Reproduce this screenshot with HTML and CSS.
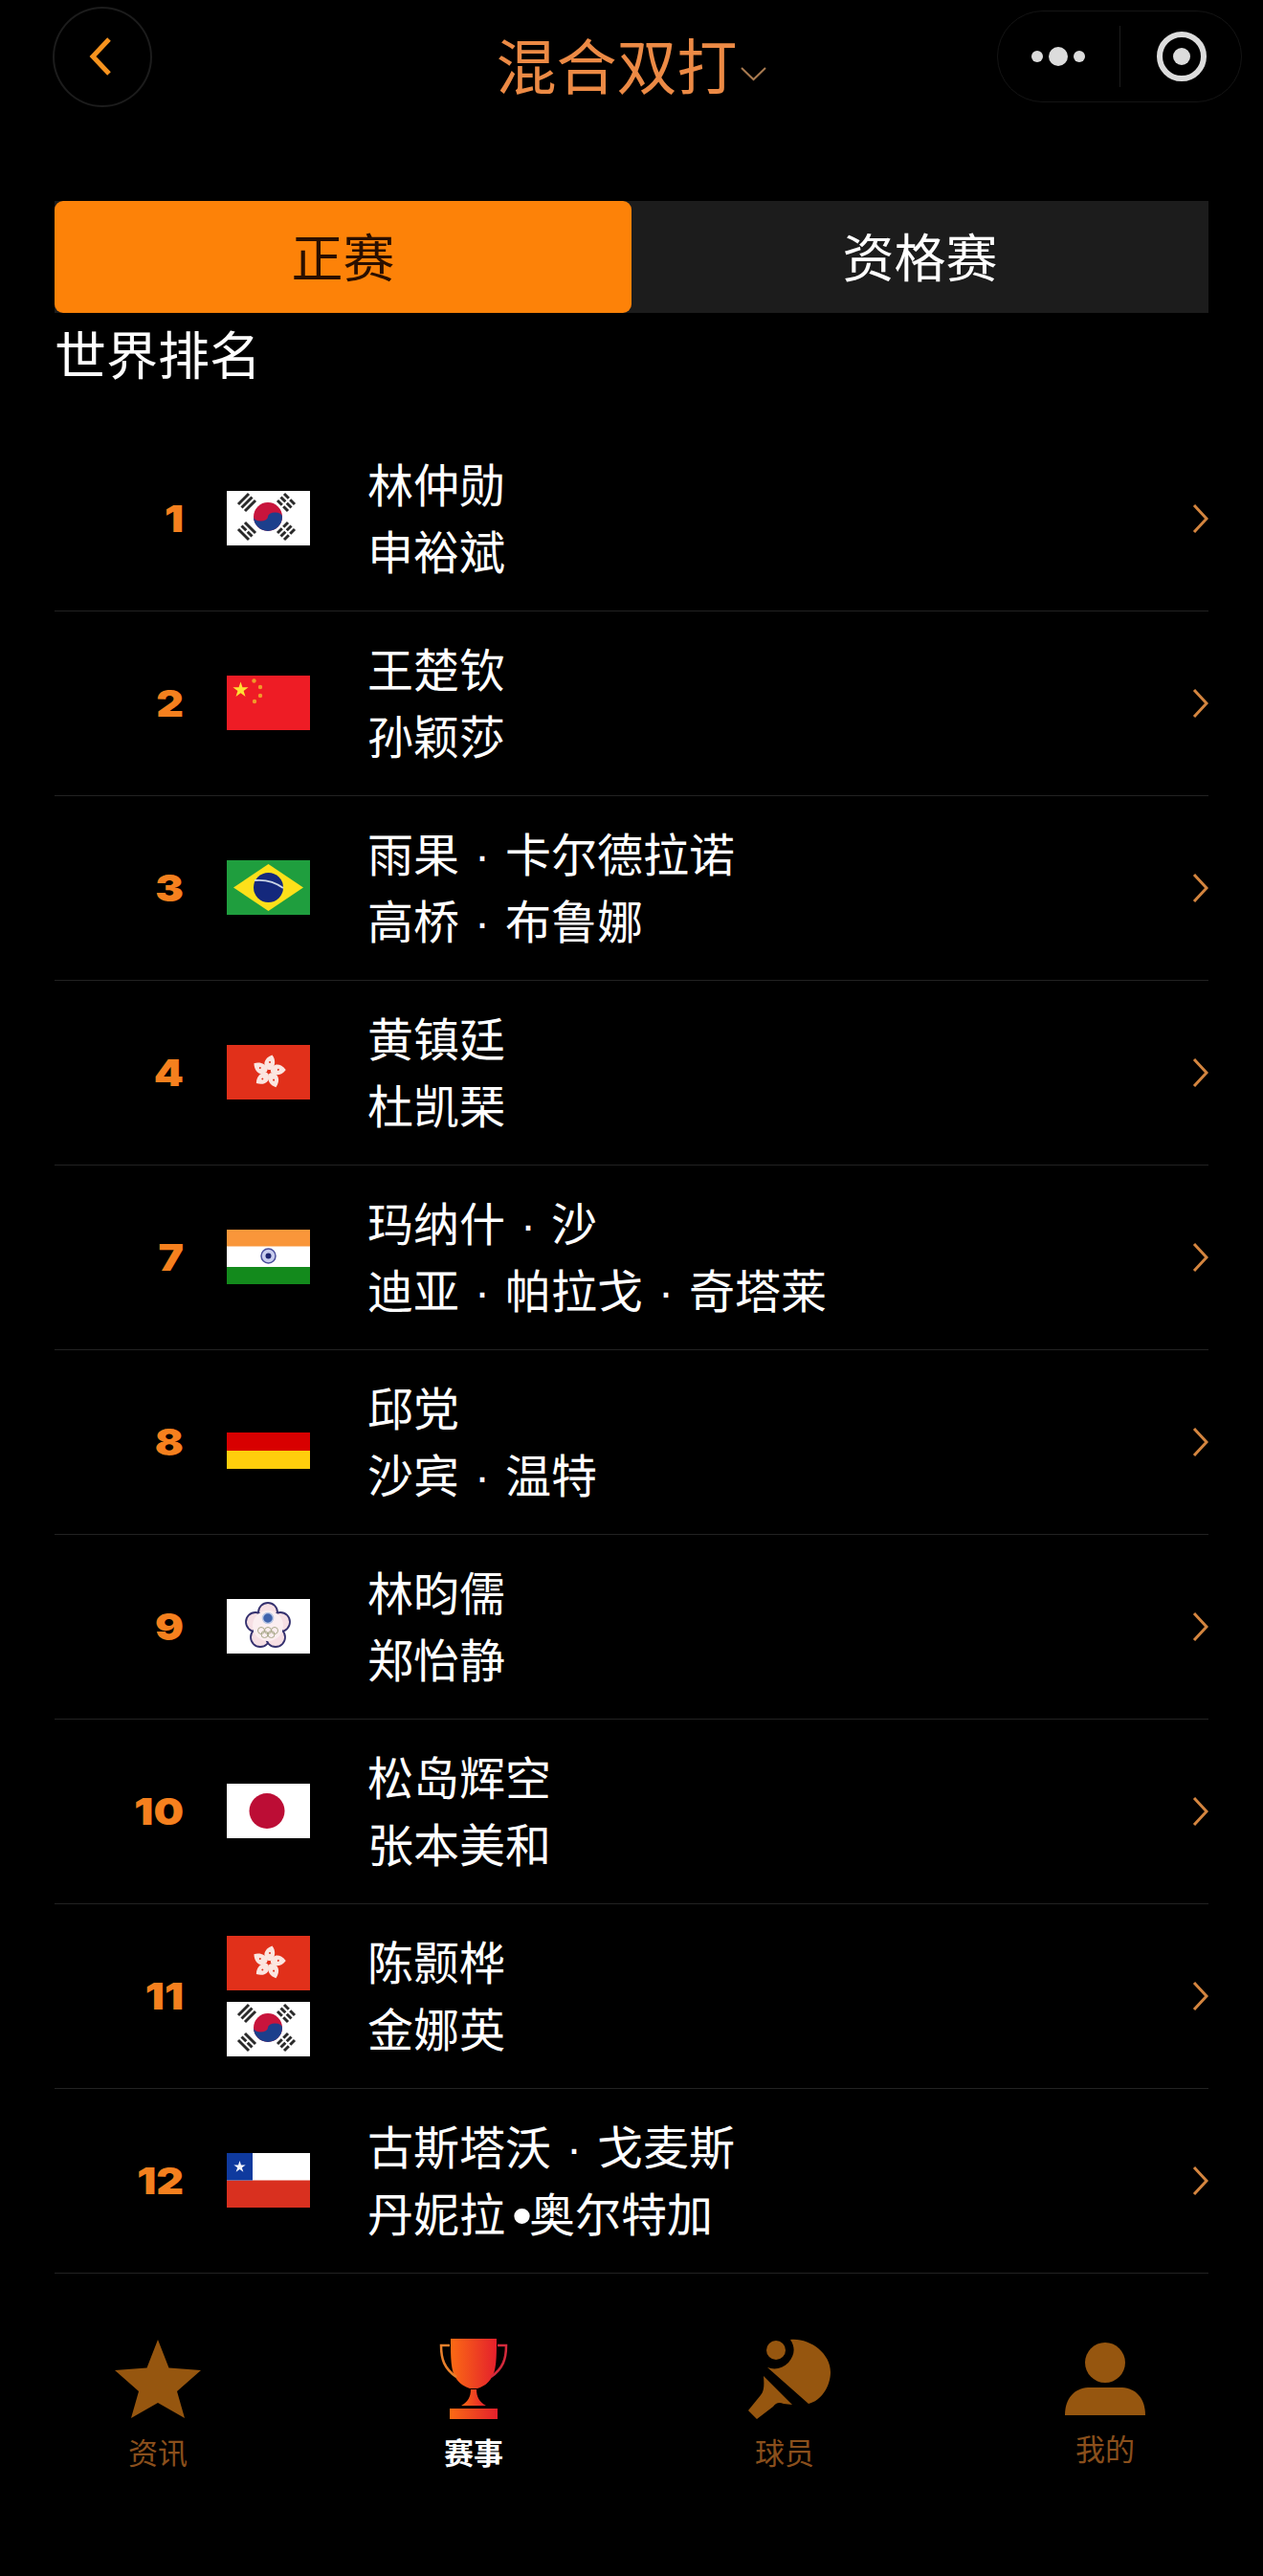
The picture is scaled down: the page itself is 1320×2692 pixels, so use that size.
FILE: index.html
```html
<!DOCTYPE html>
<html lang="zh-CN">
<head>
<meta charset="UTF-8">
<meta name="viewport" content="width=device-width, initial-scale=1.0">
<title>混合双打</title>
<link rel="stylesheet" href="styles.css">
</head>
<body>
  <svg class="defs" width="0" height="0">
    <defs>
      <symbol id="kor" viewBox="0 0 87 57">
        <rect width="87" height="57" fill="#fff"/>
        <circle cx="43" cy="27" r="15" fill="#c8143c"/>
        <path d="M28 27a15 15 0 0 0 30 0a7.500 4.500 0 0 0-15 0a7.500 4.500 0 0 1-15 0z" fill="#1c3f8c"/>
        <g stroke="#2a2a2a" stroke-width="3">
          <path d="M12 14 23 3M15.500 17.500 26.500 6.500M19 21 30 10"/>
          <path d="M60 3 71 14M56.500 6.500 67.500 17.500M53 10 64 21" stroke-dasharray="6.800 2"/>
          <path d="M12 40 23 51M19 33 30 44" />
          <path d="M15.500 36.500 26.500 47.500" stroke-dasharray="6.800 2"/>
          <path d="M60 51 71 40M56.500 47.500 67.500 36.500M53 44 64 33" stroke-dasharray="6.800 2"/>
        </g>
      </symbol>
      <symbol id="hkg" viewBox="0 0 87 57">
        <rect width="87" height="57" fill="#e1301a"/>
        <g id="petal">
          <path d="M43.500 26C37 22 38 14 47.500 10.500c4 5 3.500 12-1.500 15.500z" fill="#fbe6e0"/>
          <circle cx="45" cy="18" r="1" fill="#e1301a"/>
        </g>
        <use href="#petal" transform="rotate(72 44 28)"/>
        <use href="#petal" transform="rotate(144 44 28)"/>
        <use href="#petal" transform="rotate(216 44 28)"/>
        <use href="#petal" transform="rotate(288 44 28)"/>
      </symbol>
    </defs>
  </svg>

  <header class="top">
    <button class="back">
      <svg width="24" height="42" viewBox="0 0 24 42"><path d="M21 3 4 21l17 18" fill="none" stroke="#f7931e" stroke-width="5"/></svg>
    </button>
    <h1 class="title">混合双打<svg class="caret" width="29" height="16" viewBox="0 0 29 16"><path d="M2 2l12.500 12L27 2" fill="none" stroke="#a87a50" stroke-width="2"/></svg></h1>
    <div class="capsule">
      <div class="dots"><i></i><i class="big"></i><i></i></div>
      <div class="capsule-line"></div>
      <div class="target"><i></i></div>
    </div>
  </header>

  <div class="tabs">
    <div class="tab active">正赛</div>
    <div class="tab">资格赛</div>
  </div>

  <h2 class="section">世界排名</h2>

  <ul class="rank-list">
    <li class="row">
      <span class="rank">1</span>
      <div class="flags"><svg class="flag"><use href="#kor"/></svg></div>
      <div class="names"><div>林仲勋</div><div>申裕斌</div></div>
      <svg class="arrow" width="18" height="32" viewBox="0 0 18 32"><path d="M3 2l13 14L3 30"/></svg>
    </li>
    <li class="row">
      <span class="rank">2</span>
      <div class="flags">
        <svg class="flag" viewBox="0 0 87 57">
          <rect width="87" height="57" fill="#ee1c25"/>
          <polygon points="14.500,6.500 16.440,12.330 22.580,12.370 17.640,16.020 19.500,21.880 14.500,18.300 9.500,21.880 11.360,16.020 6.420,12.370 12.560,12.330" fill="#ffe034"/>
          <g fill="#f09a2a"><circle cx="28.500" cy="5.500" r="2.200"/><circle cx="35" cy="12" r="2.200"/><circle cx="35" cy="21" r="2.200"/><circle cx="29" cy="27" r="2.200"/></g>
        </svg>
      </div>
      <div class="names"><div>王楚钦</div><div>孙颖莎</div></div>
      <svg class="arrow" width="18" height="32" viewBox="0 0 18 32"><path d="M3 2l13 14L3 30"/></svg>
    </li>
    <li class="row">
      <span class="rank">3</span>
      <div class="flags">
        <svg class="flag" viewBox="0 0 87 57">
          <rect width="87" height="57" fill="#1f9e3e"/>
          <path d="M43.500 4 80 28.500 43.500 53 7 28.500z" fill="#fde01a"/>
          <circle cx="43.500" cy="28.500" r="15.500" fill="#14287c"/>
          <path d="M29 21c11-1 22 2 30 8" fill="none" stroke="#ccd6e6" stroke-width="1.800"/>
        </svg>
      </div>
      <div class="names"><div>雨果<span class="sep">·</span>卡尔德拉诺</div><div>高桥<span class="sep">·</span>布鲁娜</div></div>
      <svg class="arrow" width="18" height="32" viewBox="0 0 18 32"><path d="M3 2l13 14L3 30"/></svg>
    </li>
    <li class="row">
      <span class="rank">4</span>
      <div class="flags"><svg class="flag"><use href="#hkg"/></svg></div>
      <div class="names"><div>黄镇廷</div><div>杜凯琹</div></div>
      <svg class="arrow" width="18" height="32" viewBox="0 0 18 32"><path d="M3 2l13 14L3 30"/></svg>
    </li>
    <li class="row">
      <span class="rank">7</span>
      <div class="flags">
        <svg class="flag" viewBox="0 0 87 57">
          <rect width="87" height="57" fill="#fff"/>
          <rect width="87" height="17.500" fill="#f9963a"/>
          <rect y="39" width="87" height="18" fill="#138a1c"/>
          <circle cx="43.500" cy="27.500" r="7.500" fill="#c9cdee" stroke="#4a4f9c" stroke-width="1.500"/>
          <circle cx="43.500" cy="27.500" r="3" fill="#1e2470"/>
        </svg>
      </div>
      <div class="names"><div>玛纳什<span class="sep">·</span>沙</div><div>迪亚<span class="sep">·</span>帕拉戈<span class="sep">·</span>奇塔莱</div></div>
      <svg class="arrow" width="18" height="32" viewBox="0 0 18 32"><path d="M3 2l13 14L3 30"/></svg>
    </li>
    <li class="row">
      <span class="rank">8</span>
      <div class="flags">
        <svg class="flag" viewBox="0 0 87 57">
          <rect width="87" height="19" fill="#000"/>
          <rect y="19" width="87" height="19" fill="#d80000"/>
          <rect y="38" width="87" height="19" fill="#ffce0c"/>
        </svg>
      </div>
      <div class="names"><div>邱党</div><div>沙宾<span class="sep">·</span>温特</div></div>
      <svg class="arrow" width="18" height="32" viewBox="0 0 18 32"><path d="M3 2l13 14L3 30"/></svg>
    </li>
    <li class="row">
      <span class="rank">9</span>
      <div class="flags">
        <svg class="flag" viewBox="0 0 87 57">
          <rect width="87" height="57" fill="#fff"/>
          <g fill="#f6dfe4" stroke="#34306e" stroke-width="1.800">
            <circle cx="43" cy="14" r="10"/><circle cx="30" cy="24" r="10"/><circle cx="56" cy="24" r="10"/><circle cx="35" cy="40" r="10"/><circle cx="51" cy="40" r="10"/>
          </g>
          <circle cx="43" cy="28" r="16" fill="#fbeef0"/>
          <circle cx="43" cy="20" r="5.500" fill="#3f63ad" stroke="#bcc9e6" stroke-width="1.500"/>
          <g fill="none" stroke="#a9a88a" stroke-width="1"><circle cx="36" cy="33" r="3.500"/><circle cx="43" cy="33" r="3.500"/><circle cx="50" cy="33" r="3.500"/><circle cx="39.500" cy="37" r="3.500"/><circle cx="46.500" cy="37" r="3.500"/></g>
        </svg>
      </div>
      <div class="names"><div>林昀儒</div><div>郑怡静</div></div>
      <svg class="arrow" width="18" height="32" viewBox="0 0 18 32"><path d="M3 2l13 14L3 30"/></svg>
    </li>
    <li class="row">
      <span class="rank">10</span>
      <div class="flags">
        <svg class="flag" viewBox="0 0 87 57">
          <rect width="87" height="57" fill="#fff"/>
          <circle cx="42" cy="28.500" r="18.500" fill="#bc0d35"/>
        </svg>
      </div>
      <div class="names"><div>松岛辉空</div><div>张本美和</div></div>
      <svg class="arrow" width="18" height="32" viewBox="0 0 18 32"><path d="M3 2l13 14L3 30"/></svg>
    </li>
    <li class="row">
      <span class="rank">11</span>
      <div class="flags">
        <svg class="flag"><use href="#hkg"/></svg>
        <svg class="flag"><use href="#kor"/></svg>
      </div>
      <div class="names"><div>陈颢桦</div><div>金娜英</div></div>
      <svg class="arrow" width="18" height="32" viewBox="0 0 18 32"><path d="M3 2l13 14L3 30"/></svg>
    </li>
    <li class="row">
      <span class="rank">12</span>
      <div class="flags">
        <svg class="flag" viewBox="0 0 87 57">
          <rect width="87" height="57" fill="#fff"/>
          <rect y="28.500" width="87" height="28.500" fill="#d9301f"/>
          <rect width="27" height="28.500" fill="#0f3a9e"/>
          <polygon points="13.500,8 14.970,12.480 19.680,12.490 15.880,15.270 17.320,19.760 13.500,17 9.680,19.760 11.120,15.270 7.320,12.490 12.030,12.480" fill="#f2f4fa"/>
        </svg>
      </div>
      <div class="names"><div>古斯塔沃<span class="sep">·</span>戈麦斯</div><div>丹妮拉<span class="bullet">•</span>奥尔特加</div></div>
      <svg class="arrow" width="18" height="32" viewBox="0 0 18 32"><path d="M3 2l13 14L3 30"/></svg>
    </li>
  </ul>

  <nav class="tabbar">
    <div class="nav-item">
      <svg class="nav-icon" width="90" height="84" viewBox="0 0 90 84"><path d="M45 1l11.500 29.500L90 33 65 55l8 28-28-16-28 16 8-28L0 33l33.500-2.500z" fill="#96560f"/></svg>
      <span>资讯</span>
    </div>
    <div class="nav-item on">
      <svg class="nav-icon" width="72" height="84" viewBox="0 0 72 84">
        <defs><linearGradient id="cup" x1="0" x2="1" y1="0" y2="0"><stop offset="0" stop-color="#fb6a14"/><stop offset="1" stop-color="#e4202c"/></linearGradient></defs>
        <path d="M12 0h48c0 20 0 34-6 42-4 6-9 8-14 10h-8c-5-2-10-4-14-10-6-8-6-22-6-42z" fill="url(#cup)"/>
        <path d="M11 7H2c0 14 3 24 16 33" fill="none" stroke="#e8802c" stroke-width="2.500"/>
        <path d="M61 7h9c0 14-3 24-16 33" fill="none" stroke="#d42a3c" stroke-width="2.500"/>
        <path d="M33 53h6c0 8 3 13 10 17H23c7-4 10-9 10-17z" fill="url(#cup)"/>
        <rect x="11" y="73" width="50" height="11" fill="url(#cup)"/>
      </svg>
      <span>赛事</span>
    </div>
    <div class="nav-item player">
      <svg class="nav-icon" width="86" height="84" viewBox="0 0 86 84">
        <g fill="#96560f">
          <circle cx="29" cy="12" r="10"/>
          <path d="M44 1c20-2 42 14 42 34 0 15-10 30-23 33L20 30c8 3 16 1 22-5 6-7 8-15 2-24z"/>
          <path d="M16 39l30 30-9-1c-5-2-8-1-11 3L9 84 0 75l13-16c3-4 4-8 3-20z"/>
        </g>
      </svg>
      <span>球员</span>
    </div>
    <div class="nav-item me">
      <svg class="nav-icon" width="84" height="76" viewBox="0 0 84 76">
        <ellipse cx="42" cy="21" rx="21" ry="21" fill="#96560f"/>
        <path d="M0 76c0-18 10-28 24-29h36c14 1 24 11 24 29z" fill="#96560f"/>
      </svg>
      <span>我的</span>
    </div>
  </nav>
</body>
</html>
```

FILE: styles.css
```css
* {
  box-sizing: border-box;
}
body {
  margin: 0;
  background-color: #000;
  color: #fff;
  font-family: "Liberation Sans", "Noto Sans CJK SC", sans-serif;
}
.defs {
  display: block;
  height: 0;
}

/* top bar */
.top {
  display: grid;
  grid-template-columns: 1fr auto 1fr;
  align-items: center;
  height: 118px;
  padding: 0 22px;
}
.back {
  display: flex;
  align-items: center;
  justify-content: center;
  width: 104px;
  height: 105px;
  margin-left: 33px;
  padding: 0 5px 0 0;
  border: 2px solid #1c1c1c;
  border-radius: 50%;
  background: none;
}
.title {
  display: flex;
  align-items: center;
  margin: 24px 0 0;
  color: #ec8a45;
  font-size: 63px;
  font-weight: 400;
  line-height: 80px;
}
.caret {
  margin-top: 12px;
  margin-left: 2px;
}
.capsule {
  display: flex;
  align-items: center;
  justify-self: end;
  width: 256px;
  height: 96px;
  border: 1px solid #141414;
  border-radius: 48px;
}
.dots {
  display: flex;
  align-items: center;
  gap: 6px;
  margin-left: 35px;
}
.dots i {
  width: 12px;
  height: 12px;
  border-radius: 50%;
  background-color: #dcdcdc;
}
.dots i.big {
  width: 20px;
  height: 20px;
}
.capsule-line {
  width: 1px;
  height: 64px;
  margin-left: 36px;
  background-color: #1c1c1c;
}
.target {
  display: flex;
  align-items: center;
  justify-content: center;
  width: 52px;
  height: 52px;
  margin-left: 38px;
  border: 6px solid #dcdcdc;
  border-radius: 50%;
}
.target i {
  width: 18px;
  height: 18px;
  border-radius: 50%;
  background-color: #dcdcdc;
}

/* tabs */
.tabs {
  display: flex;
  height: 117px;
  margin: 92px 57px 0;
  background-color: #1c1c1c;
}
.tab {
  flex: 1;
  display: flex;
  align-items: center;
  justify-content: center;
  padding-bottom: 4px;
  font-size: 54px;
}
.tab.active {
  border-radius: 9px;
  background-color: #fd8208;
  color: #2a0f00;
}

.section {
  margin: 0 57px;
  padding-top: 4px;
  font-size: 54px;
  font-weight: 400;
  line-height: 84px;
}

/* ranking rows */
.rank-list {
  list-style: none;
  margin: 31px 57px 0;
  padding: 0;
}
.row {
  display: flex;
  align-items: center;
  height: 193px;
  border-bottom: 1px solid #222;
}
.rank {
  flex: none;
  width: 135px;
  margin-right: 45px;
  padding-bottom: 2px;
  color: #f5801e;
  font-family: Inter, "DejaVu Sans", sans-serif;
  font-size: 39px;
  font-weight: 900;
  text-align: right;
  transform: scaleX(1.14);
  transform-origin: right center;
}
.flags {
  flex: none;
  display: flex;
  flex-direction: column;
  gap: 12px;
  width: 87px;
  margin-right: 60px;
  padding-bottom: 1px;
}
.flag {
  display: block;
  width: 87px;
  height: 57px;
}
.names {
  flex: 1;
  padding-top: 4px;
  font-size: 48px;
  line-height: 70px;
}
.sep {
  display: inline-block;
  width: 1em;
  text-align: center;
}
.bullet {
  margin-left: 7px;
  margin-right: -3px;
  font-size: 60px;
  line-height: 0;
  vertical-align: -4px;
}
.arrow {
  flex: none;
}
.arrow path {
  fill: none;
  stroke: #d4853f;
  stroke-width: 3;
}

/* bottom bar */
.tabbar {
  display: flex;
  padding-top: 68px;
}
.nav-item {
  flex: 1;
  display: flex;
  flex-direction: column;
  align-items: center;
  color: #8a4f1c;
  font-size: 31px;
  line-height: 40px;
}
.nav-item span {
  margin-top: 17px;
}
.nav-item.on {
  color: #fff;
  font-weight: 700;
}
.nav-item.player span {
  margin-right: 10px;
}
.nav-item.me {
  padding-top: 4px;
}
.nav-item.me span {
  margin-top: 17px;
}
```
